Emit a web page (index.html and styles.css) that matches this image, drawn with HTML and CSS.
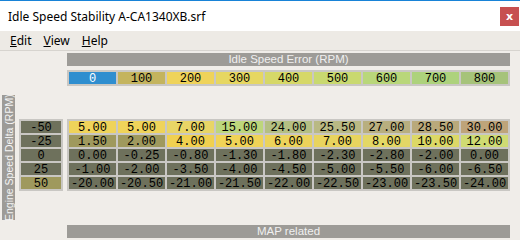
FILE: index.html
```html
<!DOCTYPE html>
<html lang="en">

<head>
    <meta charset="UTF-8">
    <title>Idle Speed Stability A-CA1340XB.srf</title>
    <link rel="stylesheet" href="styles.css">
</head>

<body>
    <div class="window">
        <div class="titlebar">
            <span class="title">Idle Speed Stability A-CA1340XB.srf</span>
            <span class="close">x</span>
        </div>
        <div class="menubar">
            <span class="menu"><u>E</u>dit</span>
            <span class="menu"><u>V</u>iew</span>
            <span class="menu"><u>H</u>elp</span>
        </div>

        <div class="content">
            <div class="axis-label"><span>Engine Speed Delta (RPM)</span></div>

            <div class="frame row-heads">
                <div class="cell c-olive">-50</div>
                <div class="cell c-olive">-25</div>
                <div class="cell c-olive">0</div>
                <div class="cell c-olive">25</div>
                <div class="cell c-khaki">50</div>
            </div>

            <div class="main">
                <div class="bar">Idle Speed Error (RPM)</div>

                <div class="frame col-heads">
                    <div class="cell c-blue">0</div>
                    <div class="cell" style="background:#c4b45e">100</div>
                    <div class="cell" style="background:#efd35a">200</div>
                    <div class="cell" style="background:#e6d762">300</div>
                    <div class="cell" style="background:#d6d868">400</div>
                    <div class="cell" style="background:#c9d970">500</div>
                    <div class="cell" style="background:#b9d77a">600</div>
                    <div class="cell" style="background:#add27c">700</div>
                    <div class="cell" style="background:#a6c37a">800</div>
                </div>

                <div class="frame grid">
                    <div class="cell" style="background:#efd35a">5.00</div>
                    <div class="cell" style="background:#efd35a">5.00</div>
                    <div class="cell" style="background:#e8d566">7.00</div>
                    <div class="cell" style="background:#bdd67c">15.00</div>
                    <div class="cell" style="background:#b4bf83">24.00</div>
                    <div class="cell" style="background:#b9b984">25.50</div>
                    <div class="cell" style="background:#b8af7f">27.00</div>
                    <div class="cell" style="background:#b9a97b">28.50</div>
                    <div class="cell" style="background:#bea47a">30.00</div>

                    <div class="cell c-khaki">1.50</div>
                    <div class="cell c-khaki">2.00</div>
                    <div class="cell" style="background:#f0d050">4.00</div>
                    <div class="cell" style="background:#f0d357">5.00</div>
                    <div class="cell" style="background:#ecd35a">6.00</div>
                    <div class="cell" style="background:#e8d45e">7.00</div>
                    <div class="cell" style="background:#e3d765">8.00</div>
                    <div class="cell" style="background:#dcd866">10.00</div>
                    <div class="cell" style="background:#cfdb73">12.00</div>

                    <div class="cell c-olive">0.00</div>
                    <div class="cell c-olive">-0.25</div>
                    <div class="cell c-olive">-0.80</div>
                    <div class="cell c-olive">-1.30</div>
                    <div class="cell c-olive">-1.80</div>
                    <div class="cell c-olive">-2.30</div>
                    <div class="cell c-olive">-2.80</div>
                    <div class="cell c-olive">-2.00</div>
                    <div class="cell c-olive">0.00</div>

                    <div class="cell c-olive">-1.00</div>
                    <div class="cell c-olive">-2.00</div>
                    <div class="cell c-olive">-3.50</div>
                    <div class="cell c-olive">-4.00</div>
                    <div class="cell c-olive">-4.50</div>
                    <div class="cell c-olive">-5.00</div>
                    <div class="cell c-olive">-5.50</div>
                    <div class="cell c-olive">-6.00</div>
                    <div class="cell c-olive">-6.50</div>

                    <div class="cell c-olive">-20.00</div>
                    <div class="cell c-olive">-20.50</div>
                    <div class="cell c-olive">-21.00</div>
                    <div class="cell c-olive">-21.50</div>
                    <div class="cell c-olive">-22.00</div>
                    <div class="cell c-olive">-22.50</div>
                    <div class="cell c-olive">-23.00</div>
                    <div class="cell c-olive">-23.50</div>
                    <div class="cell c-olive">-24.00</div>
                </div>

                <div class="bar bar-map">MAP related</div>
            </div>
        </div>
    </div>
</body>

</html>
```

FILE: styles.css
```css
body {
    margin: 0;
    background-color: #f0ede9;
    font-family: "Noto Sans", sans-serif;
}

.window {
    width: 520px;
    height: 240px;
    border-top: 1px solid #1883d7;
    overflow: hidden;
}

.titlebar {
    height: 30px;
    background: #fff;
    display: flex;
    align-items: center;
    justify-content: space-between;
}

.title {
    margin-left: 8px;
    font-size: 12px;
    color: #000;
}

.close {
    width: 19px;
    height: 19px;
    margin-right: 1px;
    background: #c75050;
    color: #fff;
    font: bold 11px "DejaVu Sans", sans-serif;
    display: flex;
    align-items: center;
    justify-content: center;
}

.menubar {
    height: 19px;
    background: #edeae5;
    border-bottom: 1px solid #d7d4cf;
    display: flex;
    align-items: center;
    padding-left: 10px;
    gap: 12px;
    font-size: 12px;
}

.content {
    display: flex;
    align-items: flex-start;
    gap: 4px;
    padding-left: 2px;
}

.axis-label {
    width: 13px;
    height: 125px;
    margin-top: 44px;
    background: #9d9b97;
    color: #f4f4f4;
    font: 10.5px "Liberation Sans", sans-serif;
    white-space: nowrap;
    writing-mode: vertical-rl;
    transform: rotate(180deg);
    display: flex;
    align-items: center;
    justify-content: center;
}

.frame {
    background: #c9c7c3;
    padding: 2px;
    gap: 2px;
}

.cell {
    height: 12px;
    line-height: 12px;
    text-align: center;
    font: 12px "Liberation Mono", monospace;
    color: #000;
}

.row-heads {
    width: 40px;
    margin-top: 68px;
    display: flex;
    flex-direction: column;
}

.main {
    width: 443px;
    display: flex;
    flex-direction: column;
}

.bar {
    height: 13px;
    margin-top: 2px;
    background: #9d9b97;
    color: #f0f0f0;
    font: 11.5px "Liberation Sans", sans-serif;
    line-height: 13px;
    text-align: center;
}

.col-heads {
    margin-top: 4px;
    display: grid;
    grid-template-columns: repeat(9, 1fr);
}

.grid {
    margin-top: 33px;
    display: grid;
    grid-template-columns: repeat(9, 1fr);
}

.bar-map {
    margin-top: 34px;
}

.c-blue {
    background: #2f8ecf;
    color: #fff;
}

.c-olive {
    background: #6e715c;
}

.c-khaki {
    background: #9f995d;
}
```
